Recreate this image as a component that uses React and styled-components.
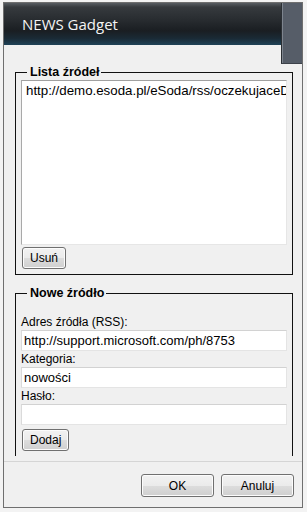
import React from "react";
import styled, { createGlobalStyle } from "styled-components";

const GlobalStyle = createGlobalStyle`
  html, body {
    margin: 0;
    padding: 0;
    background: #f3f3f3;
  }
  * {
    box-sizing: border-box;
  }
`;

const App = () => {
  return (
    <>
      <GlobalStyle />
      <Window>
        <TopRow>
          <Header>
            <Title>NEWS Gadget</Title>
          </Header>
          <SideBlock />
        </TopRow>

        <Body>
          <Group>
            <Legend>Lista źródeł</Legend>
            <ListBox>
              <ListItem>http://demo.esoda.pl/eSoda/rss/oczekujaceD</ListItem>
            </ListBox>
            <SmallButton>Usuń</SmallButton>
          </Group>

          <Group $gap={11} $padTop={13}>
            <Legend>Nowe źródło</Legend>
            <Label>Adres źródła (RSS):</Label>
            <TextInput type="text" defaultValue="http://support.microsoft.com/ph/8753" />
            <Label>Kategoria:</Label>
            <TextInput type="text" defaultValue="nowości" />
            <Label>Hasło:</Label>
            <TextInput type="password" defaultValue="" />
            <SmallButton $top={4}>Dodaj</SmallButton>
          </Group>
        </Body>

        <Footer>
          <DialogButton>OK</DialogButton>
          <DialogButton>Anuluj</DialogButton>
        </Footer>
      </Window>
    </>
  );
};

export default App;

const Window = styled.div`
  margin: 2px 0 0 3px;
  width: 300px;
  height: 506px;
  border: 1px solid #6f6f6f;
  background: #f0f0f0;
  display: flex;
  flex-direction: column;
  font-family: "Liberation Sans", Arial, sans-serif;
  font-size: 12px;
  color: #000;
`;

const TopRow = styled.div`
  display: flex;
  flex-direction: row;
  align-items: flex-start;
  height: 61px;
`;

const Header = styled.div`
  flex: 1;
  height: 42px;
  padding: 11px 0 0 18px;
  background: linear-gradient(
    180deg,
    #575c61 0%,
    #363a3e 10%,
    #282c30 40%,
    #1a1e22 66%,
    #1a2a35 84%,
    #1f4257 100%
  );
`;

const Title = styled.div`
  font-family: "Open Sans", "Noto Sans", sans-serif;
  font-size: 15px;
  line-height: 20px;
  color: #f4f4f4;
`;

const SideBlock = styled.div`
  width: 21px;
  height: 61px;
  background: #565d68;
  border-left: 1px solid #2b2f34;
  border-bottom: 1px solid #3d424a;
  box-shadow: inset 1px 0 0 #7d848e;
`;

const Body = styled.div`
  height: 392px;
  overflow: hidden;
  padding: 1px 9px 0 11px;
`;

const Group = styled.fieldset`
  margin: ${(p) => p.$gap || 0}px 0 0 0;
  padding: ${(p) => p.$padTop || 0}px 5px ${(p) => (p.$padTop ? 12 : 5)}px 5px;
  border: 1px solid #111;
  min-width: 0;
  display: flex;
  flex-direction: column;
  align-items: flex-start;
`;

const Legend = styled.legend`
  margin-left: 6px;
  padding: 0 2px 0 3px;
  font-weight: bold;
  font-size: 12.5px;
  line-height: 15px;
`;

const ListBox = styled.div`
  width: 100%;
  height: 165px;
  background: #fff;
  border: 1px solid;
  border-color: #a0a0a0 #e6e6e6 #e6e6e6 #a9a9a9;
  padding: 2px 0 2px 4px;
  overflow: hidden;
`;

const ListItem = styled.div`
  font-size: 13.3px;
  line-height: 15px;
  white-space: nowrap;
  overflow: hidden;
`;

const SmallButton = styled.button`
  margin: ${(p) => p.$top || 2}px 0 0 1px;
  height: 22px;
  padding: 0 7px;
  font-family: "Liberation Sans", Arial, sans-serif;
  font-size: 12px;
  color: #000;
  border: 1px solid #707070;
  border-radius: 3px;
  background: linear-gradient(180deg, #f2f2f2 0%, #ebebeb 50%, #dddddd 51%, #cfcfcf 100%);
  box-shadow: inset 0 0 0 1px #fcfcfc;
  cursor: pointer;
`;

const Label = styled.div`
  line-height: 16px;
  height: 16px;
`;

const TextInput = styled.input`
  width: 100%;
  height: 21px;
  margin: 0;
  padding: 0 2px;
  font-family: "Liberation Sans", Arial, sans-serif;
  font-size: 13px;
  color: #000;
  background: #fff;
  border: 1px solid;
  border-color: #d2d2d2 #e4e4e4 #e4e4e4 #dadada;
  outline: none;
`;

const Footer = styled.div`
  margin-top: 5px;
  flex: 1;
  border-top: 1px solid #d5d5d5;
  display: flex;
  flex-direction: row;
  justify-content: flex-end;
  align-items: flex-start;
  gap: 7px;
  padding: 12px 8px 0 0;
`;

const DialogButton = styled.button`
  width: 73px;
  height: 23px;
  padding: 0;
  font-family: "Liberation Sans", Arial, sans-serif;
  font-size: 12px;
  color: #000;
  border: 1px solid #707070;
  border-radius: 3px;
  background: linear-gradient(180deg, #f2f2f2 0%, #ebebeb 50%, #dddddd 51%, #cfcfcf 100%);
  box-shadow: inset 0 0 0 1px #fcfcfc;
  cursor: pointer;
`;
